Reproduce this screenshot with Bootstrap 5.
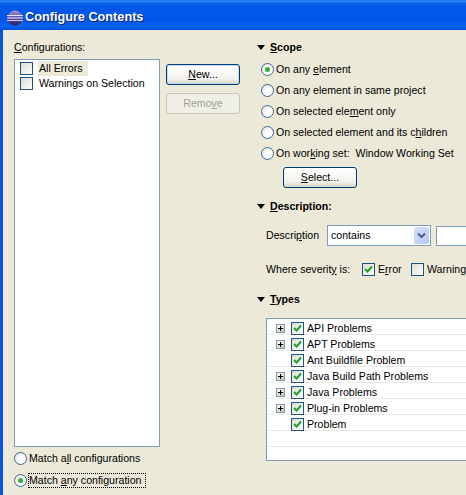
<!DOCTYPE html>
<html><head><meta charset="utf-8">
<link href="https://cdn.jsdelivr.net/npm/bootstrap@5.3.0/dist/css/bootstrap.min.css" rel="stylesheet">
<style>
html,body{margin:0;height:495px;overflow:hidden;background:#ece9d8}
body{font:10.6px/13px "Liberation Sans",sans-serif;color:#000}
.xp-win{width:466px;height:495px;overflow:hidden;background:#0854e3;padding-left:3px}
.xp-title{height:30px;margin-left:-3px;background:linear-gradient(#0a5fe6 0,#3a93ff 1px,#0a60e8 3px,#0058e6 8px,#0255ea 20px,#0a64f0 26px,#0050d8 30px);color:#fff;font-weight:700;font-size:12.7px;padding:5px 0 0 7px;gap:2px;text-shadow:1px 1px 0 #0f1f5f}
.xp-body{background:#ece9d8;height:465px;width:463px;padding:0 0 0 11px;overflow:hidden}
.left-col{width:146px;flex:none;height:465px}
.lbl{margin:11px 0 0;height:12px;line-height:12px;white-space:nowrap}
.cfg-box{height:388px;margin-top:6px;background:#fff;border:1px solid #7f9db9;padding:1px 5px}
.cfg-row{height:15px;gap:6px;white-space:nowrap}
.cfg-name{padding:0 4px 0 0;height:15px;line-height:14px}
.cfg-sel{background:#ece9d8;width:50px;margin-left:-1px;padding-left:1px}
.xchk{width:13px;height:13px;flex:none;border:1px solid #1c5180;background:linear-gradient(135deg,#dcdcd7,#fff);display:flex;align-items:center;justify-content:center}
.xchk svg{display:block}
.xrad{width:13px;height:13px;flex:none;border-radius:50%;border:1px solid #3a6a98;background:radial-gradient(circle at 65% 65%,#fff 30%,#dcdcd7 100%);display:flex;align-items:center;justify-content:center}
.xrad.on::after{content:"";width:5px;height:5px;border-radius:50%;background:#2fb13a}
.rad-row{gap:2px;height:13px;line-height:13px;white-space:nowrap}
.bottom-rads{margin-top:5px;gap:9px}
.focusdot{outline:1px dotted #000;outline-offset:0;padding-right:3px}
.xbtn{width:74px;height:21px;font:10.6px/13px "Liberation Sans",sans-serif;color:#000;background:linear-gradient(#fff,#f4f3ee 70%,#d9d6c8);border:1px solid #003c74;border-radius:3px;padding:0;display:block;text-align:center}
.xbtn.def{box-shadow:inset 0 0 0 1px #c8d8f5}
.xbtn:disabled{color:#a1a192;border-color:#c9c7ba;background:#f0efe6;opacity:1}
.mid-col{width:96px;flex:none;padding:34px 0 0 6px}
.mid-col .xbtn+.xbtn{margin-top:8px}
.right-col{width:300px;flex:none;padding-top:11px}
.sec-h{height:12px;line-height:12px;font-weight:700;gap:5px;white-space:nowrap;margin-left:1px}
.tri{width:0;height:0;border-left:4.5px solid transparent;border-right:4.5px solid transparent;border-top:5px solid #000}
.scope-list{margin:10px 0 0 5px;display:flex;flex-direction:column;gap:8px}
.sel-btn{margin:7px 0 0 27px}
.desc-h{margin-top:12px}
.desc-row{margin:13px 0 0 10px;gap:0;white-space:nowrap;height:21px}
.combo{width:104px;height:21px;margin-left:8px;background:#fff;border:1px solid #7f9db9;padding:1px 1px 1px 3px;flex:none}
.combo-btn{width:15px;height:17px;background:linear-gradient(135deg,#d5e0fb,#b4c8f6);border-radius:2px}
.txt-in{width:60px;height:20px;margin-left:5px;background:#fff;border:1px solid #7f9db9;flex:none}
.sev-row{margin:16px 0 0 10px;white-space:nowrap;height:15px}
.sev-lbl{width:87px}
.sev-row .xchk{margin-left:9px}
.sev-t{margin-left:3px;width:23px}
.sev-row .sev-w{margin-left:10px}
.types-h{margin-top:16px}
.tree{margin:13px 0 0 10px;height:143px;width:260px;background:#fff;border:1px solid #7f9db9;border-right:0;padding-top:0}
.tr-row{height:16px;border-bottom:1px solid #ecebe3;margin-left:1px;white-space:nowrap;padding:3px 0 0 8px;gap:3px}
.tw{height:9px;flex:none;border:1px solid #7b9ab8;width:9px;background:linear-gradient(135deg,#fff,#c8c4b2);margin-right:3px}
.tw-blank{width:9px;height:9px;flex:none;margin-right:3px}
.tw::before{content:"";display:block;margin:3px 1px 0;height:1px;background:#000}
.tw::after{content:"";display:block;width:1px;height:5px;margin:-3px auto 0;background:#000}
.u{text-decoration:underline;text-underline-offset:1px}
</style></head><body>
<div class="xp-win">
<div class="xp-title d-flex align-items-center">
<svg width="16" height="16" viewBox="0 0 16 16"><defs><linearGradient id="ec" x1="0" y1="0" x2="0" y2="1"><stop offset="0" stop-color="#9a9ad8"/><stop offset=".5" stop-color="#5a4aa0"/><stop offset="1" stop-color="#2c2060"/></linearGradient></defs><circle cx="8" cy="8" r="7.5" fill="url(#ec)"/><rect x="0" y="5" width="16" height="1" fill="#e8e4f4"/><rect x="0" y="7.5" width="16" height="1" fill="#f2eef8"/><rect x="0" y="10" width="16" height="1" fill="#cfc8e8"/></svg>
<span>Configure Contents</span></div>
<div class="xp-body d-flex">
 <div class="left-col">
  <div class="lbl"><span class="u">C</span>onfigurations:</div>
  <div class="cfg-box">
   <div class="cfg-row d-flex align-items-center"><span class="xchk"></span><span class="cfg-name cfg-sel">All Errors</span></div>
   <div class="cfg-row d-flex align-items-center"><span class="xchk"></span><span class="cfg-name">Warnings on Selection</span></div>
  </div>
  <div class="bottom-rads d-flex flex-column">
   <div class="rad-row d-flex align-items-center"><span class="xrad"></span><span>Match a<span class="u">l</span>l configurations</span></div>
   <div class="rad-row d-flex align-items-center"><span class="xrad on"></span><span class="focusdot">Match <span class="u">a</span>ny configuration</span></div>
  </div>
 </div>
 <div class="mid-col">
  <button class="xbtn def" type="button"><span class="u">N</span>ew...</button>
  <button class="xbtn" type="button" disabled>Remo<span class="u">v</span>e</button>
 </div>
 <div class="right-col">
  <div class="sec-h d-flex align-items-center"><span class="tri"></span><span><span class="u">S</span>cope</span></div>
  <div class="scope-list">
   <div class="rad-row d-flex align-items-center"><span class="xrad on"></span><span>On any <span class="u">e</span>lement</span></div>
   <div class="rad-row d-flex align-items-center"><span class="xrad"></span><span>On any element in same pro<span class="u">j</span>ect</span></div>
   <div class="rad-row d-flex align-items-center"><span class="xrad"></span><span>On selected ele<span class="u">m</span>ent only</span></div>
   <div class="rad-row d-flex align-items-center"><span class="xrad"></span><span>On selected element and its c<span class="u">h</span>ildren</span></div>
   <div class="rad-row d-flex align-items-center"><span class="xrad"></span><span>On wor<span class="u">k</span>ing set:&nbsp; Window Working Set</span></div>
  </div>
  <button class="xbtn sel-btn" type="button"><span class="u">S</span>elect...</button>
  <div class="sec-h desc-h d-flex align-items-center"><span class="tri"></span><span><span class="u">D</span>escription:</span></div>
  <div class="desc-row d-flex align-items-center"><span>Descri<span class="u">p</span>tion</span>
   <div class="combo d-flex align-items-center justify-content-between"><span>contains</span><span class="combo-btn d-flex align-items-center justify-content-center"><svg width="9" height="7" viewBox="0 0 9 7"><path d="M1 1.5l3.5 3.5L8 1.5" fill="none" stroke="#4d6185" stroke-width="2"/></svg></span></div>
   <div class="txt-in"></div></div>
  <div class="sev-row d-flex align-items-center"><span class="sev-lbl">Where severit<span class="u">y</span> is:</span><span class="xchk"><svg width="9" height="9" viewBox="0 0 9 9"><path d="M1 4l2.5 2.5L8 1.5" fill="none" stroke="#21a121" stroke-width="2"/></svg></span><span class="sev-t">E<span class="u">r</span>ror</span><span class="xchk sev-w"></span><span class="sev-t">Warning</span></div>
  <div class="sec-h types-h d-flex align-items-center"><span class="tri"></span><span><span class="u">T</span>ypes</span></div>
  <div class="tree">
   <div class="tr-row d-flex align-items-center"><span class="tw"></span><span class="xchk"><svg width="9" height="9" viewBox="0 0 9 9"><path d="M1 4l2.5 2.5L8 1.5" fill="none" stroke="#21a121" stroke-width="2"/></svg></span><span>API Problems</span></div>
   <div class="tr-row d-flex align-items-center"><span class="tw"></span><span class="xchk"><svg width="9" height="9" viewBox="0 0 9 9"><path d="M1 4l2.5 2.5L8 1.5" fill="none" stroke="#21a121" stroke-width="2"/></svg></span><span>APT Problems</span></div>
   <div class="tr-row d-flex align-items-center"><span class="tw-blank"></span><span class="xchk"><svg width="9" height="9" viewBox="0 0 9 9"><path d="M1 4l2.5 2.5L8 1.5" fill="none" stroke="#21a121" stroke-width="2"/></svg></span><span>Ant Buildfile Problem</span></div>
   <div class="tr-row d-flex align-items-center"><span class="tw"></span><span class="xchk"><svg width="9" height="9" viewBox="0 0 9 9"><path d="M1 4l2.5 2.5L8 1.5" fill="none" stroke="#21a121" stroke-width="2"/></svg></span><span>Java Build Path Problems</span></div>
   <div class="tr-row d-flex align-items-center"><span class="tw"></span><span class="xchk"><svg width="9" height="9" viewBox="0 0 9 9"><path d="M1 4l2.5 2.5L8 1.5" fill="none" stroke="#21a121" stroke-width="2"/></svg></span><span>Java Problems</span></div>
   <div class="tr-row d-flex align-items-center"><span class="tw"></span><span class="xchk"><svg width="9" height="9" viewBox="0 0 9 9"><path d="M1 4l2.5 2.5L8 1.5" fill="none" stroke="#21a121" stroke-width="2"/></svg></span><span>Plug-in Problems</span></div>
   <div class="tr-row d-flex align-items-center"><span class="tw-blank"></span><span class="xchk"><svg width="9" height="9" viewBox="0 0 9 9"><path d="M1 4l2.5 2.5L8 1.5" fill="none" stroke="#21a121" stroke-width="2"/></svg></span><span>Problem</span></div>
   <div class="tr-row"></div>
  </div>
 </div>
</div>
</div>
</body></html>
